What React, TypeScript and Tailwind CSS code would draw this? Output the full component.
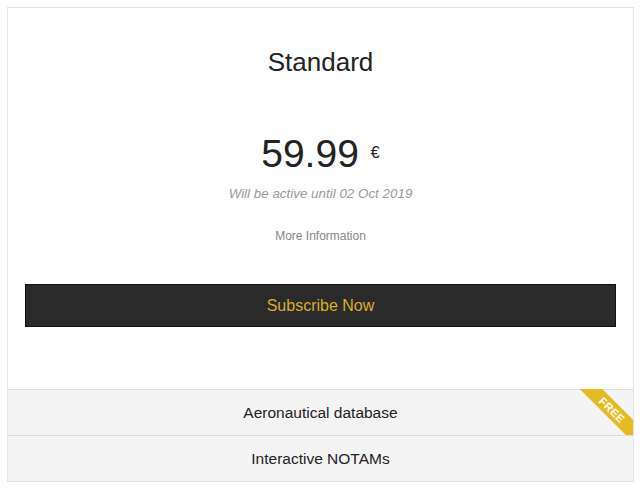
const features = ["Aeronautical database", "Interactive NOTAMs"];

function FreeRibbon() {
  // Corner ribbon on the first feature row, clipped to a small square.
  return (
    <div className="pointer-events-none absolute -top-px right-0 h-[54px] w-[54px] overflow-hidden">
      <div className="absolute left-[-12px] top-[13px] flex h-[16px] w-[90px] rotate-45 items-center justify-center bg-[#e6bb22] text-[11px] font-bold uppercase leading-none tracking-[0.5px] text-white">
        Free
      </div>
    </div>
  );
}

export default function App() {
  return (
    <div className="min-h-[493px] bg-white pl-[7px] pt-[7px] font-['Liberation_Sans',Arial,sans-serif]">
      <div className="w-[627px] border border-[#e4e4e4] bg-white">
        <div className="flex flex-col items-center pt-[39px]">
          <h1 className="text-[26px] leading-[30px] text-[#222]">Standard</h1>

          <div className="mt-[55px] flex items-center">
            <span className="text-[39px] leading-[44px] text-[#222]">59.99</span>
            <span className="ml-[12px] mt-[-2px] text-[16px] leading-[20px] text-[#222]">€</span>
          </div>
          <p className="mt-[10px] text-[13.4px] italic leading-[16px] text-[#9a9a9a]">
            Will be active until 02 Oct 2019
          </p>
          <a className="mt-[26px] text-[12px] leading-[16px] text-[#888]">More Information</a>
        </div>

        <div className="px-[17px] pt-[40px]">
          <button className="flex h-[43px] w-full items-center justify-center border border-[#111] bg-[#2a2a2a] text-[16px] text-[#dcae2c]">
            Subscribe Now
          </button>
        </div>

        <ul className="mt-[62px]">
          {features.map((f, i) => (
            <li
              key={f}
              className="relative flex h-[46px] items-center justify-center border-t border-[#dedede] bg-[#f4f4f4] pt-[1px] text-[15.5px] text-[#222]"
            >
              {f}
              {i === 0 && <FreeRibbon />}
            </li>
          ))}
        </ul>
      </div>
    </div>
  );
}
